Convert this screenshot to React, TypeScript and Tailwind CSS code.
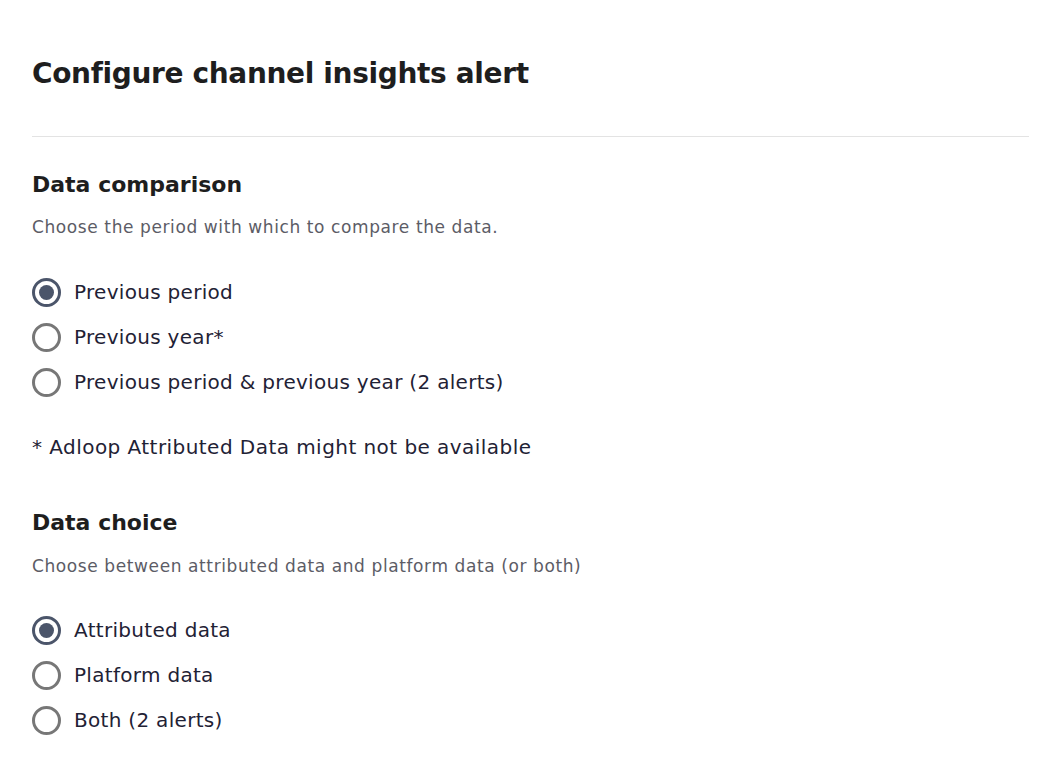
import { useState } from 'react';

const font = { fontFamily: '"DejaVu Sans", "Open Sans", sans-serif' };

type Option = { value: string; label: string };

function RadioGroup({ options, value, onChange }: { options: Option[]; value: string; onChange: (v: string) => void }) {
  return (
    <div className="flex flex-col gap-[17px]">
      {options.map((opt) => {
        const checked = opt.value === value;
        return (
          <label key={opt.value} className="flex items-center gap-[13px] cursor-pointer h-[28px]" onClick={() => onChange(opt.value)}>
            <span
              className={`w-[29px] h-[29px] rounded-full flex items-center justify-center shrink-0 border-[3px] ${checked ? 'border-[#4b556a]' : 'border-[#777777]'}`}
            >
              {checked && <span className="w-[15px] h-[15px] rounded-full bg-[#4b556a]" />}
            </span>
            <span className="text-[20px] text-[#1f2235] tracking-[0.3px]">{opt.label}</span>
          </label>
        );
      })}
    </div>
  );
}

export default function App() {
  const [comparison, setComparison] = useState('previous_period');
  const [choice, setChoice] = useState('attributed');

  return (
    <div className="bg-white min-h-screen pl-8 pr-4 pt-[54px]" style={font}>
      <h1 className="text-[28px] font-bold text-[#1e1e1e] leading-[40px] tracking-[-0.35px]">Configure channel insights alert</h1>
      <div className="border-t border-[#e3e3e3] mt-[42px]" />

      {/* Data comparison */}
      <section className="pt-[33px]">
        <h2 className="text-[22px] font-semibold text-[#1e1e1e] leading-[30px]">Data comparison</h2>
        <p className="text-[17px] text-[#5c5c66] mt-[15px] leading-[24px] tracking-[0.6px]">Choose the period with which to compare the data.</p>
        <div className="mt-[39px]">
          <RadioGroup
            value={comparison}
            onChange={setComparison}
            options={[
              { value: 'previous_period', label: 'Previous period' },
              { value: 'previous_year', label: 'Previous year*' },
              { value: 'both', label: 'Previous period & previous year (2 alerts)' },
            ]}
          />
        </div>
        <p className="text-[20px] text-[#1f2235] mt-[37px] leading-[28px] tracking-[0.45px]">* Adloop Attributed Data might not be available</p>
      </section>

      {/* Data choice */}
      <section className="pt-[47px]">
        <h2 className="text-[22px] font-semibold text-[#1e1e1e] leading-[30px]">Data choice</h2>
        <p className="text-[17px] text-[#5c5c66] mt-[16px] leading-[24px] tracking-[0.6px]">Choose between attributed data and platform data (or both)</p>
        <div className="mt-[38px]">
          <RadioGroup
            value={choice}
            onChange={setChoice}
            options={[
              { value: 'attributed', label: 'Attributed data' },
              { value: 'platform', label: 'Platform data' },
              { value: 'both', label: 'Both (2 alerts)' },
            ]}
          />
        </div>
      </section>
    </div>
  );
}
